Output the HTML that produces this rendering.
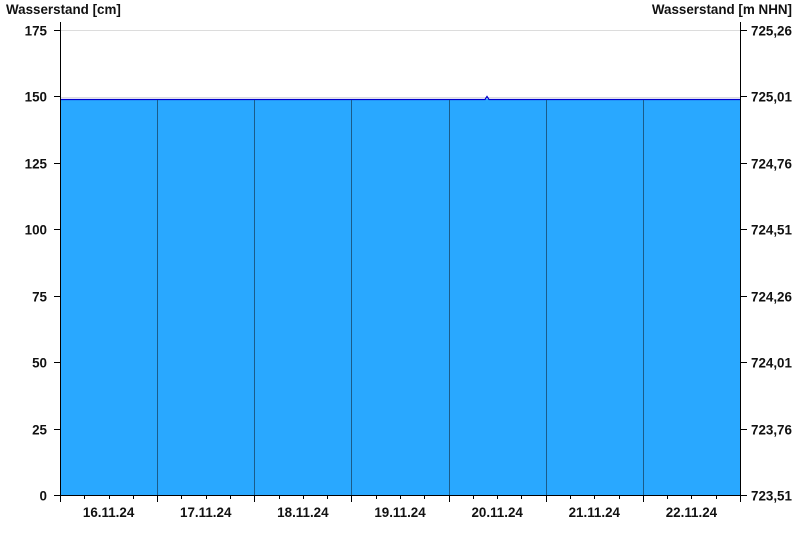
<!DOCTYPE html>
<html><head><meta charset="utf-8"><style>
html,body{margin:0;padding:0;background:#fff;width:800px;height:550px;overflow:hidden}
svg text{font-family:"Liberation Sans",Arial,sans-serif;font-weight:bold;font-size:13.4px;fill:#111}
</style></head><body>
<svg width="800" height="550" xmlns="http://www.w3.org/2000/svg">
<text x="6" y="14">Wasserstand [cm]</text>
<text x="792" y="14" text-anchor="end">Wasserstand [m NHN]</text>
<g stroke="#dcdcdc" stroke-width="1">
<line x1="60" y1="30.5" x2="740" y2="30.5"/>
<line x1="60" y1="97.5" x2="740" y2="97.5"/>
</g>
<rect x="60" y="99" width="680" height="396" fill="#29a8ff"/>
<polyline points="60,99.5 485,99.5 487,96.5 489,99.5 740,99.5" fill="none" stroke="#0000cc" stroke-width="1.3"/>
<g stroke="#1a5c8a" stroke-width="1">
<line x1="157.5" y1="100" x2="157.5" y2="495"/>
<line x1="254.5" y1="100" x2="254.5" y2="495"/>
<line x1="351.5" y1="100" x2="351.5" y2="495"/>
<line x1="449.5" y1="100" x2="449.5" y2="495"/>
<line x1="546.5" y1="100" x2="546.5" y2="495"/>
<line x1="643.5" y1="100" x2="643.5" y2="495"/>
</g>
<g stroke="#000" stroke-width="1">
<line x1="60.5" y1="22" x2="60.5" y2="496"/>
<line x1="740.5" y1="22" x2="740.5" y2="496"/>
<line x1="60" y1="495.5" x2="741" y2="495.5"/>
</g>
<g id="ticks" stroke="#000" stroke-width="1"></g>
<g id="labels"></g>
</svg>
<script>
var ns="http://www.w3.org/2000/svg",t=document.getElementById('ticks'),l=document.getElementById('labels');
function ln(a,b,c,d){var e=document.createElementNS(ns,'line');e.setAttribute('x1',a);e.setAttribute('y1',b);e.setAttribute('x2',c);e.setAttribute('y2',d);t.appendChild(e);}
function tx(x,y,s,anc){var e=document.createElementNS(ns,'text');e.setAttribute('x',x);e.setAttribute('y',y);if(anc)e.setAttribute('text-anchor',anc);e.textContent=s;l.appendChild(e);}
var L=['0','25','50','75','100','125','150','175'],R=['723,51','723,76','724,01','724,26','724,51','724,76','725,01','725,26'];
for(var i=0;i<8;i++){var y=Math.round(495-i*66.43)+0.5;ln(54,y,60,y);ln(741,y,747,y);tx(47,y+5,L[i],'end');tx(751,y+5,R[i]);}
var D=['16.11.24','17.11.24','18.11.24','19.11.24','20.11.24','21.11.24','22.11.24'];
for(var d=0;d<7;d++){var x0=60+d*97.14;for(var q=0;q<4;q++){var x=Math.round(x0+q*24.29)+0.5;ln(x,495,x,q==0?502:499);}tx(x0+48.6,517,D[d],'middle');}
ln(740.5,495,740.5,502);
</script>
</body></html>
